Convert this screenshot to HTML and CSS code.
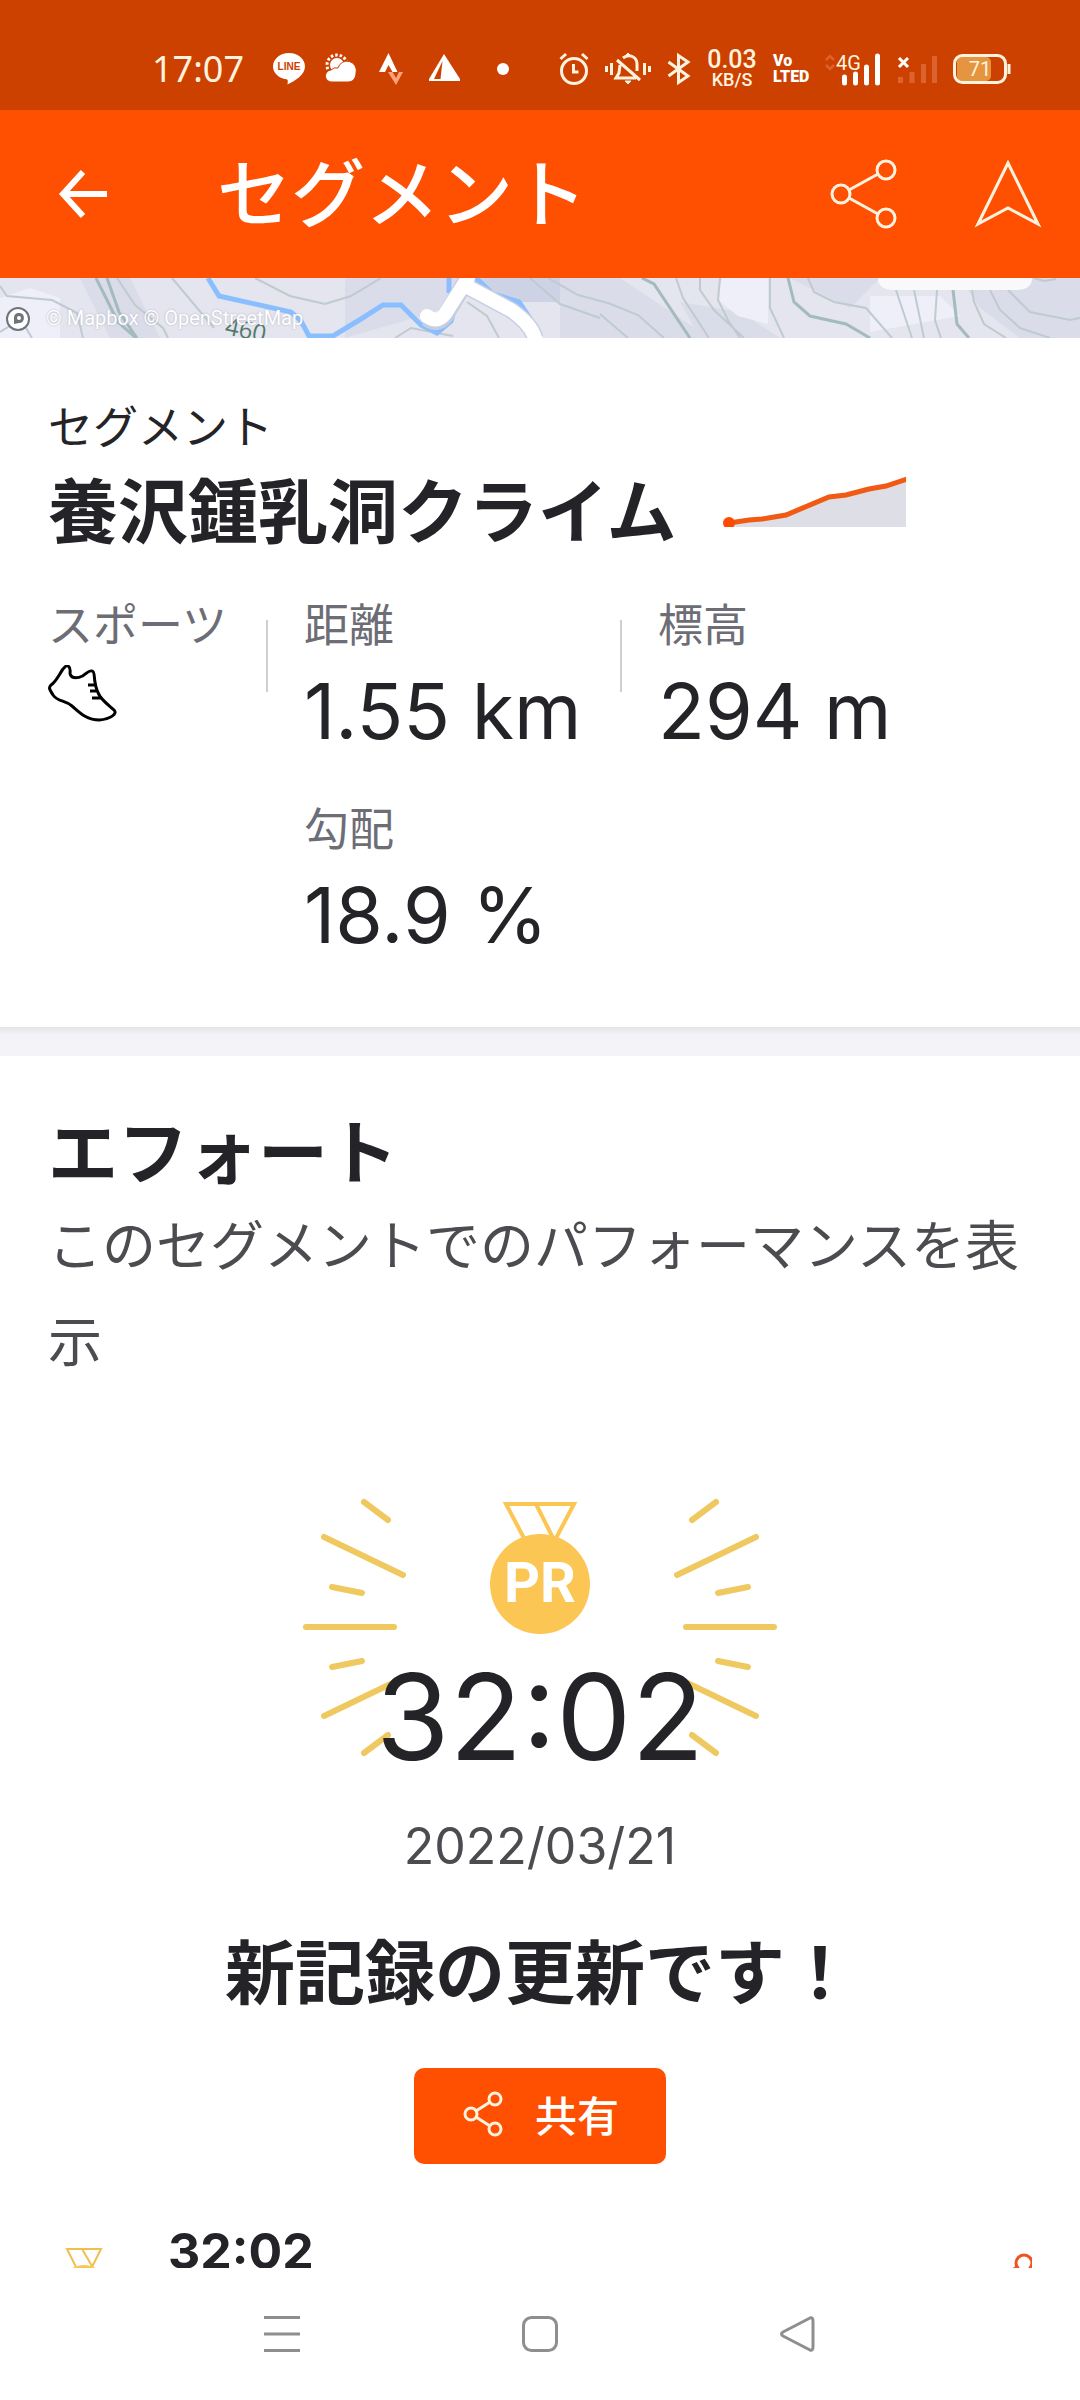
FILE: index.html
```html
<!DOCTYPE html>
<html lang="ja">
<head>
<meta charset="utf-8">
<meta name="viewport" content="width=device-width, initial-scale=1">
<title>セグメント</title>
<link rel="stylesheet" href="styles.css">
</head>
<body>
<div class="app">
  <div class="status">
    <div class="status-left">
      <span class="clock">17:07</span>
      <svg width="34" height="34" viewBox="0 0 34 34"><path d="M17 1C8 1 1 7 1 14.500c0 6.500 5.500 11.500 13.500 12.800 1.500.4 1.600 1.500 1 5.200 7-3.500 17.500-9.500 17.500-18C33 7 26 1 17 1z" fill="#fff"/><text x="17" y="18" class="line-word" text-anchor="middle">LINE</text></svg>
      <svg width="34" height="34" viewBox="0 0 34 34"><circle cx="13" cy="13" r="10" fill="none" stroke="#fff" stroke-width="3" stroke-dasharray="2.500 2"/><circle cx="13" cy="13" r="7.500" fill="#fff" stroke="#cc4100" stroke-width="1"/><path d="M8 30a6 6 0 0 1-1-12 7 7 0 0 1 7-2 9 9 0 0 1 18 5c0 5-3 9-8 9z" fill="#fff" stroke="#cc4100" stroke-width="1"/></svg>
      <svg width="34" height="34" viewBox="0 0 34 34"><path d="M12.500 1 3 20h6l3.500-7 4 7h5z" fill="#fff"/><path d="M12 20h4.500l3.500 6 3-6h4l-7 13z" fill="#ffa27c"/></svg>
      <svg width="34" height="34" viewBox="0 0 34 34"><path d="M16 2 32 27v2H1v-2z" fill="#fff"/><path d="M14.500 9 12.500 27H6z" fill="#cc4100"/></svg>
      <svg width="46" height="34" viewBox="0 0 46 34"><circle cx="23" cy="17" r="6" fill="#fff"/></svg>
    </div>
    <div class="status-right">
      <svg width="30" height="34" viewBox="0 0 30 34" fill="none" stroke="#fff3df" stroke-width="3"><circle cx="15" cy="19" r="12.500"/><path d="M1.500 7 7 2M28.500 7 23 2M14.500 12v8h5"/></svg>
      <svg width="46" height="34" viewBox="0 0 46 34" fill="none" stroke="#fff3df" stroke-width="3"><path d="M1.500 14v6M6.500 11v12M39.500 11v12M44.500 14v6M12 8l23 20M15 13l-1 8-3 5h20M18 6c6-5 14-1 14 6v7"/><path d="M20 29h6l-3 3zM21 3l2-2 2 2z" fill="#fff3df" stroke-width="1"/></svg>
      <svg width="24" height="34" viewBox="0 0 24 34" fill="none" stroke="#fff3df" stroke-width="3"><path d="M1.500 10 21 24 11.500 30.500V3.500L21 10 1.500 24"/></svg>
      <span class="speed"><span class="speed-num">0.03</span><span class="speed-unit">KB/S</span></span>
      <span class="volte"><span>Vo</span><span>LTED</span></span>
      <svg width="56" height="34" viewBox="0 0 56 34"><path d="M1 8l4-4 4 4M1 13l4 4 4-4" fill="none" stroke="#e0602a" stroke-width="2.500"/><text x="11" y="18" class="net-word">4G</text><path d="M19.500 31v-6M30.500 31v-9M41.500 31V15M52.500 31V4" stroke="#fff" stroke-width="5" stroke-linecap="round"/></svg>
      <svg width="40" height="34" viewBox="0 0 40 34"><path d="M2 6l9 9M11 6l-9 9" stroke="#fff" stroke-width="3"/><path d="M3.500 31v-6M15 31V20M26.500 31V12M37.500 31V4" stroke="#dc6330" stroke-width="5"/></svg>
      <svg width="58" height="34" viewBox="0 0 58 34"><rect x="4" y="5" width="34" height="24" rx="5" fill="#e5953f"/><rect x="1.500" y="3.500" width="51" height="27" rx="8" fill="none" stroke="#fff3df" stroke-width="3"/><path d="M56 12v10" stroke="#fff3df" stroke-width="3"/><text x="27" y="24" text-anchor="middle" class="battery-word">71</text></svg>
    </div>
  </div>

  <header class="bar">
    <button class="icon-button" type="button" aria-label="戻る"><svg width="50" height="50" viewBox="0 0 50 50" fill="none" stroke="#fff" stroke-width="6"><path d="M25 3 5 25l20 22M5 25h44"/></svg></button>
    <h1 class="bar-title">セグメント</h1>
    <button class="icon-button" type="button" aria-label="共有"><svg width="68" height="70" viewBox="0 0 68 70" fill="none" stroke="#fff3df" stroke-width="3"><circle cx="12" cy="35" r="9"/><circle cx="57" cy="11" r="9"/><circle cx="57" cy="59" r="9"/><path d="M20 31 49 15M20 39l29 16"/></svg></button>
    <button class="icon-button" type="button" aria-label="ナビ"><svg width="70" height="70" viewBox="0 0 70 70" fill="none" stroke="#fff3df" stroke-width="3"><path d="M35 4 65 65 35 49 5 65z"/></svg></button>
  </header>

  <main class="content">
    <div class="map">
      <svg class="map-art" viewBox="0 0 1080 60" preserveAspectRatio="xMidYMid slice">
        <rect width="1080" height="60" fill="#e4e5ee"/>
        <path d="M80 0h50l30 60h-50zM345 0h150l-60 34-90 26zM560 0h60l90 60H560zM680 24l60 10 40 26h-80zM790 0h90l-30 30zM960 0h120v60h-60l-40-30z" fill="#dadce9"/>
        <path d="M455 0h105v24h-50z" fill="#cdd3e4"/>
        <path d="M722 0h46v46l-30-8-20-16zM870 18h70l20 20-90 16zM30 10l30 10v40H0V20z" fill="#eeeff8"/>
        <g fill="none" stroke="#bfcbce" stroke-width="2"><path d="M0 8l7 10 45 4 25 13 6 25M117 0l18 27 28 23 5 10M172 0l42 50M255 0l35 18 35 8 26-8 30-18M0 54l10-6 16 2 6 10M395 60l16-10 42 8M467 24l20 14 12 22M530 0l30 26 40 14M548 0l30 17 30 8 30 12 26 23M600 36l28 24M676 0l7 20 26 40M700 0v12l14 20 30 28M720 0l-2 22 10 20 12 18M770 0v30l14 30M808 0l6 14 20 10 32 6 26 30M896 12l8 24 8 24M914 12l10 48M937 12l-2 30 6 18M972 12l2 12 10 22 22 14M990 12l10 20 20 18 30 10M1008 12l22 22 40 8 10-2M1034 0l10 3 12-2"/></g>
        <g fill="none" stroke="#a3bbbd" stroke-width="3"><path d="M96 0l22 44 18 16M107 0l12 34 18 26M642 0l12 6 36 54M788 0l6 24 16 14 36 8 24 14M953 12l4 34 12 14"/></g>
        <path d="M208 0l11 18 72 16 10 9 8 15h24l28-17 22-14h18l20 20 16 8 14-12 4-14M449 0v15M476 0l17 16 26 8 12 18" fill="none" stroke="#8abfff" stroke-width="5"/>
        <path d="M468 0 445 38q-8 10-18 2M466 8l45 24q20 14 24 28" fill="none" stroke="#c9cde0" stroke-width="17"/>
        <path d="M468 0 445 36q-8 10-18 2M466 8l45 24q20 14 24 28" fill="none" stroke="#fff" stroke-width="14" stroke-linecap="round"/>
        <path d="M878 0h154q0 12-16 12H894q-16 0-16-12z" fill="#f9f9fb"/>
        <text x="224" y="56" class="contour" transform="rotate(12 224 56)">460</text>
        <circle cx="18" cy="41" r="11" fill="#fff" stroke="#70737b" stroke-width="2"/><path d="M14 46v-7a5 5 0 1 1 5 6z" fill="#70737b"/><circle cx="19" cy="40" r="2" fill="#fff"/>
      </svg>
      <small class="map-credit">© Mapbox © OpenStreetMap</small>
    </div>

    <section class="details">
      <p class="kind">セグメント</p>
      <div class="name-row">
        <h2 class="heading">養沢鍾乳洞クライム</h2>
        <svg class="spark" width="183" height="52" viewBox="0 0 183 52"><path d="M6 48 26 45 39 44 63 40 106 22 123 20 146 14 163 11 183 4V52H6z" fill="#dedee7"/><path d="M6 48 26 45 39 44 63 40 106 22 123 20 146 14 163 11 184 4" fill="none" stroke="#f15a12" stroke-width="5"/><circle cx="6" cy="48" r="6" fill="#fc4c02"/></svg>
      </div>
      <dl class="stats">
        <div class="stat"><dt>スポーツ</dt><dd><svg width="70" height="58" viewBox="0 0 70 58" fill="none" stroke="#000" stroke-width="3" stroke-linejoin="round"><path d="M20 1c4 2 1 7 2.500 9 2 4 8 3 12 1C38 9 41 5 44 6c3 0 2 8 3 11 1 7 2 10 5.500 15C57 38 63 42 66 45c4 4-4 9-14.500 10C38 55 31 47 24 41 17 35 10 37 5 30 2 25 0 23 3 20 8 17 12 8 15 4 17 2 18 0 20 1zM40 20h8M42 26h8M44 33h9"/></svg></dd></div>
        <div class="stat divided"><dt>距離</dt><dd>1.55 km</dd></div>
        <div class="stat divided"><dt>標高</dt><dd>294 m</dd></div>
        <div class="stat stat-second"><dt>勾配</dt><dd>18.9 %</dd></div>
      </dl>
    </section>

    <section class="effort">
      <h2 class="heading">エフォート</h2>
      <p class="lead">このセグメントでのパフォーマンスを表示</p>
      <div class="record">
        <div class="burst">
          <svg width="480" height="270" viewBox="300 1490 480 270" fill="none">
            <g stroke="#efc85f" stroke-width="6" stroke-linecap="round"><path d="M364 1502l24 18M324 1537l79 38M332 1587l30 6M306 1627h88M332 1667l30-6M324 1716l79-38M364 1753l24-18M716 1502l-24 18M756 1537l-79 38M748 1587l-30 6M774 1627h-88M748 1667l-30-6M756 1716l-79-38M716 1753l-24-18"/></g>
            <path d="M525 1540 506 1504h68l-19 36M536 1504l17 34" stroke="#fbc653" stroke-width="4"/>
            <circle cx="540" cy="1584" r="50" fill="#fbc653"/>
            <text x="540" y="1602" text-anchor="middle" class="pr-word">PR</text>
          </svg>
          <strong class="time">32:02</strong>
        </div>
        <time class="date" datetime="2022-03-21">2022/03/21</time>
        <h3 class="heading cheer">新記録の更新です！</h3>
        <button class="share" type="button"><svg width="40" height="46" viewBox="0 0 40 46" fill="none" stroke="#fff3df" stroke-width="3"><circle cx="8" cy="23" r="6"/><circle cx="32" cy="8" r="6"/><circle cx="32" cy="38" r="6"/><path d="M13 20 27 11M13 26l14 9"/></svg>共有</button>
      </div>
      <div class="attempt">
        <svg width="52" height="68" viewBox="0 0 52 68" fill="none"><path d="M18 20 9 2h34l-9 18M24 2l10 17" stroke="#efc04f" stroke-width="2"/><circle cx="26" cy="43" r="25" fill="#fbc653"/></svg>
        <span class="attempt-time">32:02</span>
        <svg width="46" height="58" viewBox="0 0 46 58" fill="none" stroke="#f0531c" stroke-width="3"><circle cx="10" cy="29" r="8"/><circle cx="38" cy="11" r="8"/><circle cx="38" cy="47" r="8"/><path d="M17 24 31 15M17 34l14 9"/></svg>
      </div>
    </section>
  </main>

  <nav class="system-nav">
    <button class="icon-button" type="button" aria-label="メニュー"><svg width="36" height="36" viewBox="0 0 36 36" stroke="#8e8e8e" stroke-width="3"><path d="M0 1.500h36M0 18h36M0 34.500h36"/></svg></button>
    <button class="icon-button" type="button" aria-label="ホーム"><svg width="36" height="36" viewBox="0 0 36 36" fill="none" stroke="#8e8e8e" stroke-width="3"><rect x="1.500" y="1.500" width="33" height="33" rx="8"/></svg></button>
    <button class="icon-button" type="button" aria-label="戻る"><svg width="36" height="36" viewBox="0 0 36 36" fill="none" stroke="#8e8e8e" stroke-width="3" stroke-linejoin="round"><path d="M30 2q3-1 3 3v26q0 4-3 3L3 20q-3-2 0-4z"/></svg></button>
  </nav>
</div>
</body>
</html>
```
FILE: styles.css
```css
* {
  box-sizing: border-box;
}

body,
h1,
h2,
h3,
p,
dl,
dd {
  margin: 0;
}

body {
  background: #fff;
  color: #242428;
  font-family: Inter, "Noto Sans CJK JP", sans-serif;
}

svg {
  display: block;
  flex: none;
}

button {
  border: 0;
  padding: 0;
  font: inherit;
  cursor: pointer;
}

.app {
  display: flex;
  flex-direction: column;
  height: 100vh;
}

/* Status bar */
.status {
  display: flex;
  justify-content: space-between;
  align-items: center;
  flex: none;
  height: 110px;
  padding: 28px 69px 0 152px;
  background: #cc4100;
  color: #fff3df;
}

.status-left,
.status-right {
  display: flex;
  align-items: center;
}

.status-left {
  gap: 18px;
}

.status-right {
  gap: 16px;
}

.clock {
  width: 102px;
  font: 36px/40px "Noto Sans", sans-serif;
}

.line-word {
  font: 700 10px "Liberation Sans", sans-serif;
  fill: #cc4100;
}

.net-word,
.battery-word {
  font: 20px Roboto, sans-serif;
  fill: #fff3df;
}

.speed,
.volte {
  display: flex;
  flex-direction: column;
  align-items: center;
  font-family: Roboto, sans-serif;
  font-weight: 500;
}

.speed {
  width: 50px;
}

.speed-num {
  font-size: 25px;
  line-height: 22px;
}

.speed-unit {
  font-size: 18px;
  line-height: 18px;
}

.volte {
  align-items: flex-start;
  width: 36px;
  font-size: 16px;
  font-weight: 900;
  line-height: 16px;
  color: #fff;
}

/* App bar */
.bar {
  display: flex;
  align-items: center;
  flex: none;
  gap: 76px;
  height: 168px;
  padding: 0 37px 0 58px;
  background: #fe5000;
  color: #fff;
}

.icon-button {
  display: grid;
  place-items: center;
  background: none;
}

.bar-title {
  flex: 1;
  padding-left: 33px;
  font-size: 74px;
  font-weight: 500;
  line-height: 100px;
}

/* Scrolling content */
.content {
  flex: 1;
  min-height: 0;
  overflow-y: auto;
  scrollbar-width: none;
}

.map {
  position: relative;
  height: 60px;
}

.map-art {
  width: 100%;
  height: 60px;
}

.map-credit {
  position: absolute;
  left: 46px;
  bottom: 8px;
  color: #fff;
  font: 20px/24px Roboto, sans-serif;
  text-shadow: 0 0 2px #aab;
}

.contour {
  font: 24px "Open Sans", sans-serif;
  fill: #4f7a6b;
}

.details {
  padding: 60px 48px 65px;
}

.kind {
  font-size: 45px;
  line-height: 60px;
}

.name-row {
  display: flex;
  align-items: flex-start;
  gap: 46px;
  padding-top: 15px;
}

.spark {
  margin-top: 2px;
}

.heading {
  font-size: 70px;
  font-weight: 700;
  line-height: 80px;
}

.stats {
  display: grid;
  grid-template-columns: 218px 354px 1fr;
  gap: 42px 0;
  padding-top: 43px;
}

.stat {
  height: 162px;
}

.divided {
  padding-left: 38px;
  background: linear-gradient(#d0d0d3, #d0d0d3) 0 24px / 2px 72px no-repeat;
}

.stat-second {
  grid-column: 2;
  padding-left: 38px;
}

.stat dt {
  color: #6d6d76;
  font-size: 45px;
  line-height: 60px;
}

.stat dd {
  padding-top: 9px;
  font-size: 77px;
  line-height: 92px;
}

/* Effort */
.effort {
  border-top: 29px solid #f4f4f8;
  border-image: linear-gradient(#e4e4e7, #f4f4f8 8px) 29 0 0;
  padding: 58px 48px 0;
}

.lead {
  padding-top: 5px;
  color: #4b4b50;
  font-size: 54px;
  line-height: 96px;
}

.record {
  display: flex;
  flex-direction: column;
  align-items: center;
  padding-top: 99px;
}

.burst {
  display: grid;
}

.burst > * {
  grid-area: 1 / 1;
}

.pr-word {
  font: 700 56px Roboto, sans-serif;
  fill: #fff;
}

.time {
  align-self: end;
  justify-self: center;
  font-size: 119px;
  font-weight: 400;
  line-height: 86px;
}

.date {
  padding-top: 56px;
  color: #4b4b50;
  font-size: 50px;
  line-height: 60px;
}

.cheer {
  padding-top: 58px;
}

.share {
  display: flex;
  justify-content: center;
  align-items: center;
  gap: 32px;
  width: 252px;
  height: 96px;
  margin-top: 54px;
  padding: 0 0 5px 2px;
  border-radius: 10px;
  background: #fe5000;
  color: #fff;
  font-size: 42px;
  font-weight: 500;
}

.attempt {
  display: flex;
  align-items: center;
  height: 120px;
  margin-top: 57px;
  padding-left: 10px;
}

.attempt-time {
  flex: 1;
  align-self: flex-start;
  padding-left: 58px;
  font-size: 50px;
  font-weight: 700;
  line-height: 60px;
}

/* System navigation */
.system-nav {
  display: grid;
  grid-template-columns: repeat(3, 1fr);
  flex: none;
  height: 132px;
  padding: 0 153px;
  background: #fff;
}
```
